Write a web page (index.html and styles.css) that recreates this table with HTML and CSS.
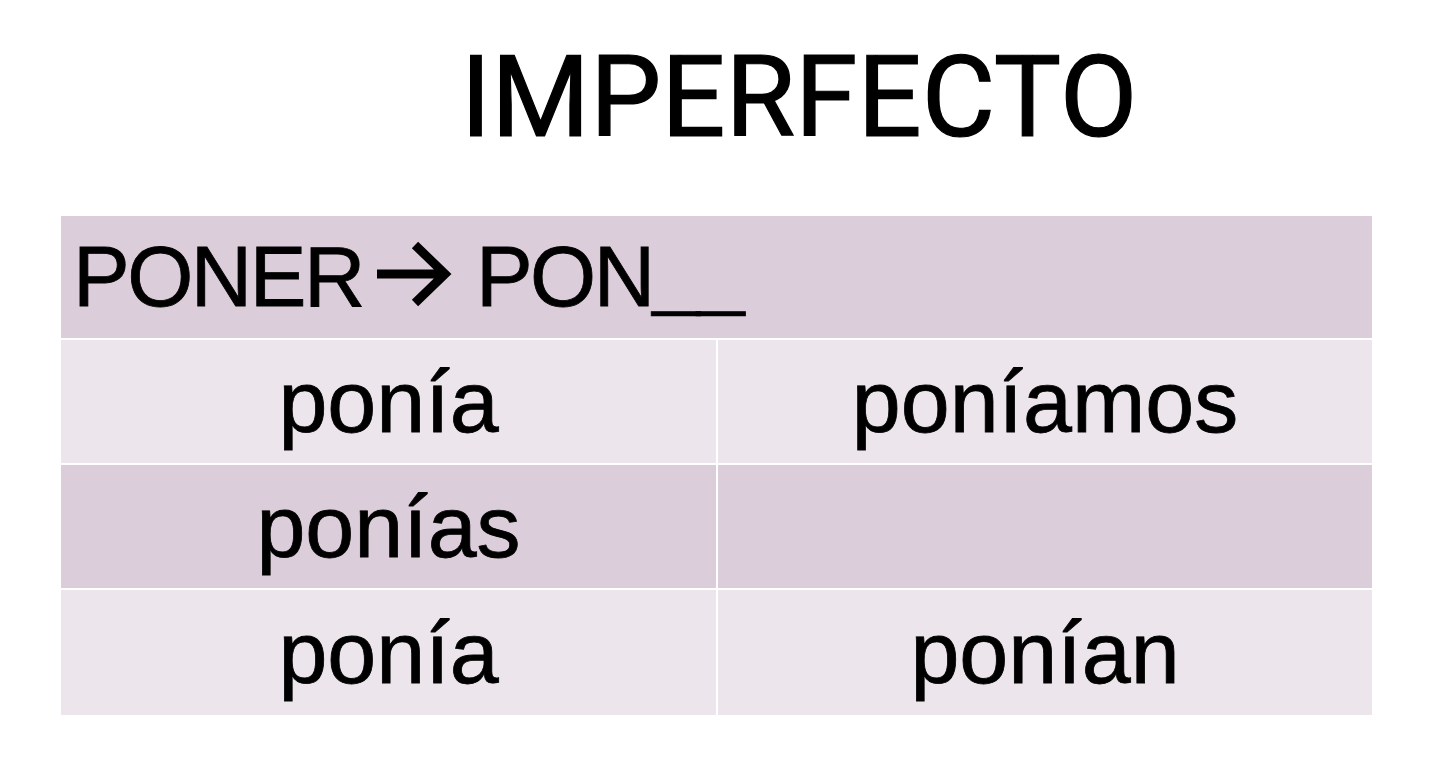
FILE: index.html
```html
<!DOCTYPE html>
<html lang="es">
<head>
<meta charset="utf-8">
<title>Imperfecto</title>
<link rel="stylesheet" href="styles.css">
</head>
<body>
<main class="page">
  <h1 class="title">IMPERFECTO</h1>
  <section class="conj">
    <div class="head">PONER<svg class="arrow" viewBox="0 0 78 68" width="78" height="68" aria-hidden="true"><path d="M2 34 H68 M40 5 L70 34 L40 63" fill="none" stroke="#000" stroke-width="9" stroke-linejoin="miter"/></svg> PON<span class="blank">__</span></div>
    <div class="cell light">ponía</div>
    <div class="cell light">poníamos</div>
    <div class="cell dark">ponías</div>
    <div class="cell dark"></div>
    <div class="cell light">ponía</div>
    <div class="cell light">ponían</div>
  </section>
</main>
</body>
</html>
```

FILE: styles.css
```css
html, body {
  margin: 0;
  padding: 0;
  background: #ffffff;
}

.page {
  width: 1440px;
  height: 771px;
  overflow: hidden;
}

.title {
  margin: 0;
  height: 216px;
  box-sizing: border-box;
  padding: 33px 0 0 158px;
  text-align: center;
  font-family: Roboto, "Liberation Sans", sans-serif;
  font-weight: 400;
  font-size: 113px;
  line-height: 130px;
  color: #000;
  -webkit-text-stroke: 1.2px #000;
}

.conj {
  margin-left: 61px;
  width: 1311px;
  display: grid;
  grid-template-columns: 655px 654px;
  grid-template-rows: 122px 123px 123px 125px;
  gap: 2px;
  background: #ffffff;
}

.head {
  grid-column: 1 / 3;
  background: #dccdda;
  display: flex;
  align-items: center;
  padding-left: 12px;
  font-family: "Liberation Sans", Arial, sans-serif;
  font-size: 85px;
  letter-spacing: -2.5px;
  color: #000;
  white-space: pre;
  -webkit-text-stroke: 0.8px #000;
}

.blank {
  display: inline-block;
  transform: translateY(-5px) scaleY(0.8);
  transform-origin: 50% 85%;
}

.arrow {
  margin-left: 12px;
  margin-right: 2px;
  margin-top: -6px;
}

.cell {
  display: flex;
  align-items: center;
  justify-content: center;
  font-family: "Liberation Sans", Arial, sans-serif;
  font-size: 88px;
  color: #000;
  -webkit-text-stroke: 0.8px #000;
}

.light {
  background: #ede5ec;
}

.dark {
  background: #dccdda;
}
```
